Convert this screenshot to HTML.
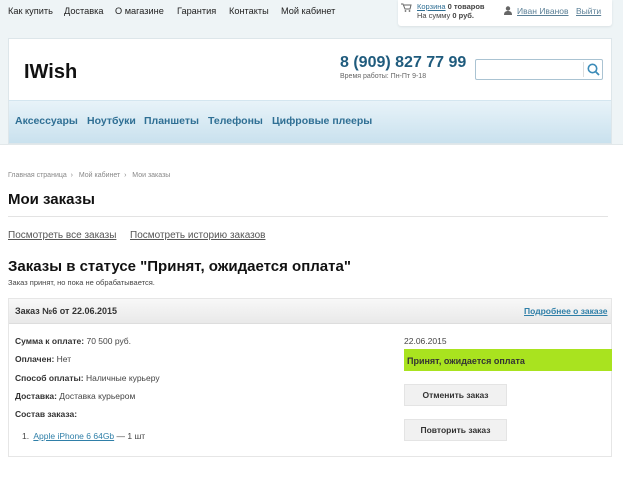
<!DOCTYPE html>
<html><head><meta charset="utf-8"><style>
*{margin:0;padding:0;box-sizing:border-box}
body{width:623px;height:478px;font-family:"Liberation Sans",sans-serif;background:#fff;position:relative;overflow:hidden;color:#222}
.top{position:absolute;left:0;top:0;width:623px;height:145px;background:#eef4f6;border-bottom:1px solid #e2e8ea}
.a{position:absolute;white-space:nowrap}
.tn{top:6px;font-size:9.2px;color:#222}
.cart{position:absolute;left:398px;top:0;width:214px;height:26px;background:#fff;border-radius:0 0 3px 3px;box-shadow:0 1px 2px #d8e0e3}
.hdr{position:absolute;left:8px;top:38px;width:604px;height:106px;background:#fff;border:1px solid #dde6ea}
.nav{position:absolute;left:0;top:61px;width:602px;height:43px;background:linear-gradient(#e8f3f9,#c9e1ee);border-top:1px solid #d4e6f0}
.nav span{position:absolute;top:14px;font-size:10.5px;font-weight:bold;color:#2f6f94}
.srch{position:absolute;left:466px;top:20px;width:128px;height:21px;border:1px solid #aac3d2;border-radius:2px;background:#fff}
.box{position:absolute;left:8px;top:298px;width:604px;height:159px;border:1px solid #e6e6e6}
.bh{height:25px;background:linear-gradient(#f8f8f8,#e9e9e9);border-bottom:1px solid #ddd}
.f{font-size:8.5px;color:#444}
.f b{color:#333}
.btn{position:absolute;left:395px;width:103px;height:22px;background:#f1f1f1;border:1px solid #e4e4e4;font-size:8.5px;font-weight:bold;color:#333;text-align:center;line-height:21px}
</style></head><body>
<div class="top"></div>
<span class="a tn" style="left:8px">Как купить</span>
<span class="a tn" style="left:64px">Доставка</span>
<span class="a tn" style="left:115px">О магазине</span>
<span class="a tn" style="left:177px">Гарантия</span>
<span class="a tn" style="left:229px">Контакты</span>
<span class="a tn" style="left:281px">Мой кабинет</span>
<div class="cart"></div>
<svg class="a" style="left:401px;top:3px" width="11" height="9" viewBox="0 0 11 9"><path d="M0 1h2l2 5h5l1-4H3" fill="none" stroke="#666" stroke-width="1"/><circle cx="4.5" cy="8" r="0.9" fill="#666"/><circle cx="8.5" cy="8" r="0.9" fill="#666"/></svg>
<span class="a" style="left:417px;top:2px;font-size:7.5px;color:#444"><u style="color:#2f6f94">Корзина</u> <b>0 товаров</b></span>
<span class="a" style="left:417px;top:11px;font-size:7.5px;color:#444">На сумму <b>0 руб.</b></span>
<svg class="a" style="left:504px;top:6px" width="8" height="9" viewBox="0 0 8 9"><circle cx="4" cy="2.5" r="2.2" fill="#666"/><path d="M0 9c0-3 1.5-4 4-4s4 1 4 4z" fill="#666"/></svg>
<span class="a" style="left:517px;top:6px;font-size:8.5px;color:#5a7f96;text-decoration:underline">Иван Иванов</span>
<span class="a" style="left:576px;top:6px;font-size:8.5px;color:#5a7f96;text-decoration:underline">Выйти</span>
<div class="hdr">
<span class="a" style="left:15px;top:22px;font-size:20px;font-weight:bold;color:#111">IWish</span>
<span class="a" style="left:331px;top:15px;font-size:16px;font-weight:bold;color:#1f5b7d">8 (909) 827 77 99</span>
<span class="a" style="left:331px;top:34px;font-size:7px;color:#666">Время работы: Пн-Пт 9-18</span>
<div class="srch"><div style="position:absolute;left:107px;top:2px;width:1px;height:15px;background:#ddd"></div>
<svg style="position:absolute;left:111px;top:3px" width="13" height="13" viewBox="0 0 13 13"><circle cx="5.5" cy="5.5" r="4.2" fill="none" stroke="#3b8bb8" stroke-width="1.6"/><path d="M8.5 8.5l3.5 3.5" stroke="#3b8bb8" stroke-width="1.8"/></svg></div>
<div class="nav"><span style="left:6px">Аксессуары</span><span style="left:78px">Ноутбуки</span><span style="left:135px">Планшеты</span><span style="left:199px">Телефоны</span><span style="left:263px">Цифровые плееры</span></div>
</div>
<span class="a" style="left:8px;top:172px;font-size:7px;color:#888">Главная страница &nbsp;›&nbsp;&nbsp; Мой кабинет &nbsp;›&nbsp;&nbsp; Мои заказы</span>
<span class="a" style="left:8px;top:191px;font-size:15px;font-weight:bold;color:#111">Мои заказы</span>
<div class="a" style="left:8px;top:216px;width:600px;height:1px;background:#e3e3e3"></div>
<span class="a" style="left:8px;top:230px;font-size:10px;color:#555;text-decoration:underline">Посмотреть все заказы</span>
<span class="a" style="left:130px;top:230px;font-size:10px;color:#555;text-decoration:underline">Посмотреть историю заказов</span>
<span class="a" style="left:8px;top:258px;font-size:15px;font-weight:bold;color:#111">Заказы в статусе "Принят, ожидается оплата"</span>
<span class="a" style="left:8px;top:278px;font-size:7.5px;color:#444">Заказ принят, но пока не обрабатывается.</span>
<div class="box">
<div class="bh"></div>
<span class="a" style="left:6px;top:7px;font-size:9px;font-weight:bold;color:#333">Заказ №6 от 22.06.2015</span>
<span class="a" style="left:515px;top:7px;font-size:8.5px;font-weight:bold;color:#2f7fa8;text-decoration:underline">Подробнее о заказе</span>
<span class="a f" style="left:6px;top:37px"><b>Сумма к оплате:</b> 70 500 руб.</span>
<span class="a f" style="left:6px;top:55px"><b>Оплачен:</b> Нет</span>
<span class="a f" style="left:6px;top:74px"><b>Способ оплаты:</b> Наличные курьеру</span>
<span class="a f" style="left:6px;top:92px"><b>Доставка:</b> Доставка курьером</span>
<span class="a f" style="left:6px;top:110px"><b>Состав заказа:</b></span>
<span class="a f" style="left:13px;top:132px">1.&nbsp; <u style="color:#2f7fa8">Apple iPhone 6 64Gb</u> — 1 шт</span>
<span class="a f" style="left:395px;top:37px">22.06.2015</span>
<div class="a" style="left:395px;top:50px;width:208px;height:22px;background:#a9e31f"></div>
<span class="a" style="left:398px;top:57px;font-size:9px;font-weight:bold;color:#333">Принят, ожидается оплата</span>
<div class="btn" style="top:85px">Отменить заказ</div>
<div class="btn" style="top:120px">Повторить заказ</div>
</div>
</body></html>
